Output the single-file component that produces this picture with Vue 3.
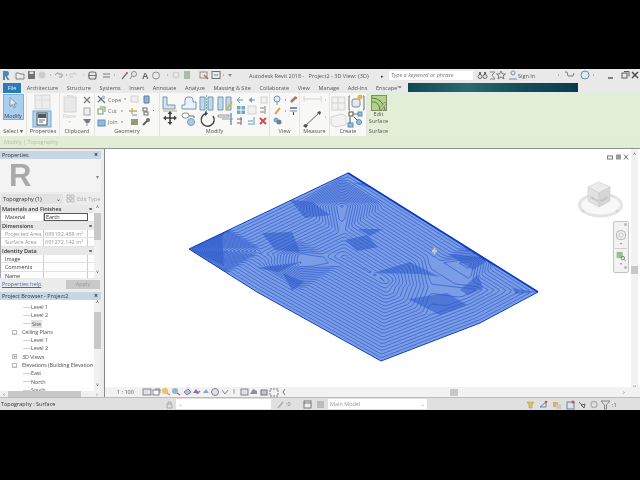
<script setup>
import { computed } from "vue"

const tabs = ["Architecture", "Structure", "Systems", "Insert", "Annotate", "Analyze", "Massing & Site", "Collaborate", "View", "Manage", "Add-Ins", "Enscape™"]

const propRows = [
  { head: "Materials and Finishes" },
  { label: "Material", value: "Earth", active: true },
  { head: "Dimensions" },
  { label: "Projected Area", value: "689192.488 m²", dim: true },
  { label: "Surface Area", value: "691272.142 m²", dim: true },
  { head: "Identity Data" },
  { label: "Image", value: "" },
  { label: "Comments", value: "" },
  { label: "Name", value: "" },
]

const tree = [
  { text: "Level 1", depth: 2 },
  { text: "Level 2", depth: 2 },
  { text: "Site", depth: 2, selected: true },
  { text: "Ceiling Plans", depth: 1, box: "-" },
  { text: "Level 1", depth: 2 },
  { text: "Level 2", depth: 2 },
  { text: "3D Views", depth: 1, box: "+" },
  { text: "Elevations (Building Elevation", depth: 1, box: "-" },
  { text: "East", depth: 2 },
  { text: "North", depth: 2 },
  { text: "South", depth: 2 },
]

// site outline, clockwise on screen
const outline = [[189, 249], [348, 173], [538, 292], [480, 323], [381, 361], [257, 292]]
const outlinePoints = outline.map(p => p.join(",")).join(" ")

// steep faces where the contours bunch together
const steep = [
  [[189, 249], [222, 233], [224, 266]],
  [[257, 268], [300, 262], [278, 272]],
  [[283, 273], [304, 282], [292, 291]],
  [[262, 233], [292, 232], [300, 252], [275, 250]],
  [[345, 240], [367, 235], [378, 247], [357, 251]],
  [[358, 229], [383, 229], [370, 236]],
  [[353, 183], [370, 182], [378, 190]],
  [[408, 299], [447, 293], [467, 305], [440, 315]],
  [[448, 254], [492, 258], [473, 270]],
  [[460, 290], [478, 275], [483, 288], [468, 295]],
  [[512, 288], [537, 292], [516, 294]],
  [[373, 273], [410, 262], [440, 277], [420, 274]],
  [[290, 200], [312, 202], [330, 215], [305, 218]],
]

const bumps = [
  [225, 250, 38, 1.2], [340, 205, 45, 0.7], [300, 265, 40, 0.6],
  [430, 285, 50, -0.4], [470, 262, 32, 0.7],
]

function edgeDistance(x, y) {
  let d = Infinity
  for (let i = 0; i < outline.length; i++) {
    const [ax, ay] = outline[i]
    const [bx, by] = outline[(i + 1) % outline.length]
    const len = Math.hypot(bx - ax, by - ay)
    d = Math.min(d, ((bx - ax) * (y - ay) - (by - ay) * (x - ax)) / len)
  }
  return d
}

function height(x, y) {
  let h = edgeDistance(x, y)
  if (h < 0) return h
  for (const [cx, cy, r, k] of bumps) {
    const reach = Math.abs(x - cx) + 1.6 * Math.abs(y - cy)
    if (reach < r) h += k * (r - reach)
  }
  return h
}

// marching squares over the height field
const contours = computed(() => {
  const step = 3
  const gap = 3.1
  const parts = []
  const cross = (x1, y1, v1, x2, y2, v2, l) => {
    const t = (l - v1) / (v2 - v1)
    return [(x1 + (x2 - x1) * t).toFixed(1), (y1 + (y2 - y1) * t).toFixed(1)]
  }
  for (let x = 186; x < 540; x += step) {
    for (let y = 170; y < 364; y += step) {
      const a = height(x, y), b = height(x + step, y)
      const c = height(x + step, y + step), d = height(x, y + step)
      const lo = Math.min(a, b, c, d), hi = Math.max(a, b, c, d)
      if (hi < 0) continue
      for (let n = Math.ceil(Math.max(lo, 0.5) / gap); n * gap < hi; n++) {
        const l = n * gap + 0.01
        const hits = []
        if ((a < l) !== (b < l)) hits.push(cross(x, y, a, x + step, y, b, l))
        if ((b < l) !== (c < l)) hits.push(cross(x + step, y, b, x + step, y + step, c, l))
        if ((d < l) !== (c < l)) hits.push(cross(x, y + step, d, x + step, y + step, c, l))
        if ((a < l) !== (d < l)) hits.push(cross(x, y, a, x, y + step, d, l))
        if (hits.length >= 2) parts.push(`M${hits[0][0]} ${hits[0][1]}L${hits[1][0]} ${hits[1][1]}`)
        if (hits.length === 4) parts.push(`M${hits[2][0]} ${hits[2][1]}L${hits[3][0]} ${hits[3][1]}`)
      }
    }
  }
  return parts.join("")
})
</script>

<template>
  <div class="screen">
    <div class="letterbox"></div>
    <div class="revit">
      <header class="titlebar">
        <svg class="qat" viewBox="0 69 240 13" width="240" height="13">
          <path d="M3 80V71h4q2 0 2 2.500t-2 2.500l2.500 4H7.500L5.500 76.500H5V80z" fill="#2b6ca8"/>
          <path d="M16 73h3l1 1h4v5h-8z" fill="none" stroke="#6d6d6d"/>
          <rect x="28" y="71" width="7" height="8" fill="#555"/><rect x="29.500" y="71.500" width="4" height="2.500" fill="#ddd"/>
          <circle cx="42" cy="75" r="3.500" fill="#c4c8cb"/><path d="M50 75h1" stroke="#777"/>
          <path d="M55 75l3-2.500v1.500h4v3h-3" fill="none" stroke="#888"/><path d="M66 75h1" stroke="#777"/>
          <path d="M77 75l-3-2.500v1.500h-4v3h3" fill="none" stroke="#c2c2c2"/><path d="M83 75h1" stroke="#aaa"/>
          <rect x="89" y="72" width="7" height="7" rx="2" fill="none" stroke="#555" stroke-width="1.200"/><path d="M88 75.500h9" stroke="#555"/>
          <path d="M103 74h7M103 77h7" stroke="#8a8f94" stroke-width="1.300"/><path d="M114 75h1" stroke="#777"/>
          <path d="M122 79l5-6" stroke="#555" stroke-width="1.300"/><circle cx="127" cy="73" r="1" fill="#b34"/>
          <circle cx="134" cy="74" r="2.500" fill="none" stroke="#777"/><path d="M132 76l-2 3" stroke="#777"/>
          <text x="142" y="79" class="qat-a">A</text>
          <path d="M156 72a3.500 3.500 0 1 1 0 7a3.500 3.500 0 1 1 0-7z" fill="none" stroke="#777"/><path d="M167 75h1" stroke="#777"/>
          <circle cx="176" cy="75" r="3" fill="none" stroke="#bbb"/>
          <path d="M184 72h6M184 74h6M184 76h6M184 78h6" stroke="#4b7c4b"/>
          <rect x="200" y="72" width="7" height="6" fill="none" stroke="#777"/><path d="M204 75l4 4" stroke="#c33" stroke-width="1.500"/>
          <rect x="212" y="71.500" width="8" height="7" fill="none" stroke="#555"/><path d="M214 75h4" stroke="#38a"/><path d="M223 75h1" stroke="#777"/>
          <path d="M228 74h4l-2 3z" fill="#777"/>
        </svg>
        <span class="doc-title">Autodesk Revit 2018 -&nbsp;&nbsp; Project2 - 3D View: {3D}</span>
        <span class="search-arrow">▸</span>
        <span class="search">Type a keyword or phrase</span>
        <svg class="comm" viewBox="475 69 165 13" width="165" height="13">
          <circle cx="480" cy="76.500" r="2" fill="none" stroke="#555"/><circle cx="485" cy="76.500" r="2" fill="none" stroke="#555"/><path d="M479 72h2v3h-2zM484 72h2v3h-2z" fill="#555"/>
          <path d="M490 72h5l-3 3 3 4h-5" fill="none" stroke="#777"/>
          <path d="M501 71l1.500 3h3l-2.500 2 1 3-3-2-3 2 1-3-2.500-2h3z" fill="none" stroke="#666"/>
          <circle cx="513" cy="73" r="2" fill="none" stroke="#5d7fa3"/><path d="M509 79h8" stroke="#5d7fa3"/>
          <path d="M558 75h1" stroke="#777"/><path d="M565 72h2l1 4h5l1-3" fill="none" stroke="#666"/>
          <circle cx="585" cy="75" r="4" fill="none" stroke="#4c7fb0"/><path d="M593 75h1" stroke="#777"/>
          <path d="M608 78h5" stroke="#333" stroke-width="1.300"/>
          <rect x="622" y="73" width="5" height="5" fill="none" stroke="#444"/><path d="M624 71.500h5v5" fill="none" stroke="#444"/>
          <path d="M634 72l6 6m0-6l-6 6" transform="translate(-2 0)" stroke="#333" stroke-width="1.500"/>
        </svg>
        <span class="signin">Sign In</span>
      </header>

      <nav class="tabbar">
        <span class="file-tab">File</span>
        <span v-for="tab in tabs" :key="tab" class="tab">{{ tab }}</span>
        <div class="banner"></div>
      </nav>

      <section class="ribbon">
        <div class="panel p-select">
          <button class="modify-btn">
            <svg viewBox="0 0 20 14" width="20" height="14"><path d="M7 1.500v9l2.300-2 1.700 3.500 1.400-.7-1.700-3.300 3-.2z" fill="#e8f2fb" stroke="#667" stroke-width=".7"/></svg>
            <span>Modify</span>
          </button>
          <span class="panel-label">Select ▾</span>
        </div>
        <div class="panel p-props">
          <svg viewBox="27 93 33 35" width="33" height="35">
            <rect x="35" y="95" width="15" height="14" fill="#ececec" stroke="#cfcfcf"/><path d="M35 100h15M42 95v14" stroke="#d5d5d5"/>
            <rect x="33" y="111" width="18" height="16" fill="#a9cfee" stroke="#5f97c5"/>
            <rect x="37" y="113" width="10" height="12" fill="#fff" stroke="#333"/><rect x="38" y="114" width="8" height="4" fill="#2d3c56"/><path d="M39 120h6M39 122h4" stroke="#556"/>
          </svg>
          <span class="panel-label">Properties</span>
        </div>
        <div class="panel p-clip">
          <svg viewBox="60 93 35 35" width="35" height="35">
            <rect x="64" y="97" width="12" height="15" fill="#e6e6e6" stroke="#cdcdcd"/><rect x="67" y="95" width="6" height="3" fill="#ddd"/>
            <text x="63" y="118" class="ghost-text">Paste</text><path d="M68 121h3l-1.500 2z" fill="#ccc"/>
            <path d="M84 97l6 6m0-6l-6 6" stroke="#666" stroke-width="1.300"/>
            <rect x="84" y="108" width="6" height="7" fill="#eee" stroke="#999"/>
            <path d="M83 119h8l-2 4h-3z" fill="#667"/><path d="M87 123v3" stroke="#886"/>
          </svg>
          <span class="panel-label">Clipboard</span>
        </div>
        <div class="panel p-geom">
          <svg viewBox="95 93 65 35" width="65" height="35">
            <path d="M98 96l7 7M104 96l-6 6" stroke="#556" stroke-width="1.200"/><rect x="102" y="96" width="3" height="3" fill="#9bc"/>
            <text x="108" y="102" class="rib-text">Cope</text><path d="M124 98.500h2l-1 1.500z" fill="#555"/>
            <rect x="98" y="109" width="5" height="5" fill="#fff" stroke="#5b8a5b"/><path d="M100 107h5v5" fill="none" stroke="#5b8a5b"/>
            <text x="108" y="113" class="rib-text">Cut</text><path d="M121 110.500h2l-1 1.500z" fill="#555"/>
            <rect x="98" y="120" width="7" height="6" fill="#7fb0dd" stroke="#4a7fb3"/>
            <text x="108" y="124" class="rib-text">Join</text><path d="M121 121.500h2l-1 1.500z" fill="#555"/>
            <rect x="131" y="96" width="7" height="6" fill="#efefef" stroke="#ccc"/>
            <path d="M144 96h5v7h-5z" fill="#7ea6cf" stroke="#47698c"/>
            <path d="M132 108v6M129 111h8" stroke="#c99a45" stroke-width="1.300"/><path d="M132 115h5" stroke="#5987b0"/>
            <rect x="143" y="108" width="4" height="3" fill="#fff" stroke="#555"/><rect x="144" y="112" width="4" height="3" fill="#fff" stroke="#555"/><path d="M153 110.500h1" stroke="#555"/>
            <rect x="131" y="119" width="7" height="6" fill="#6d9a62"/><path d="M131 125l7-6" stroke="#d55" stroke-width="1"/>
            <path d="M143 125l4-4" stroke="#444" stroke-width="2"/><circle cx="148" cy="120" r="2" fill="#555"/>
          </svg>
          <span class="panel-label">Geometry</span>
        </div>
        <div class="panel p-modify">
          <svg viewBox="160 93 110 35" width="110" height="35">
            <path d="M163 97h4v8h8v4h-12z" fill="#cfe0f0" stroke="#5a87ad"/><path d="M163 111h14" stroke="#c99a45"/>
            <path d="M182 109v-4h3v-5q0-3 3-3h2q3 0 3 3v2h3v7z" fill="#eaf1f8" stroke="#5a87ad"/>
            <path d="M200 97h5v13h-5zM208 97h5v13h-5z" fill="#b9d3e8" stroke="#5a87ad"/><path d="M206.500 95v17" stroke="#6a9" stroke-dasharray="2 1"/>
            <path d="M218 97h5v13h-5zM226 97h5v13h-5z" fill="#b9d3e8" stroke="#5a87ad"/><path d="M226 110l6-8" stroke="#d8a22c" stroke-width="1.800"/>
            <path d="M237 100h6M240 97l-3 3 3 3M249 100h6" stroke="#4d89bb" fill="none"/><path d="M249 100l3-3v6z" fill="#4d89bb"/>
            <rect x="261" y="97" width="6" height="6" fill="#f3f3f3" stroke="#ccc"/>
            <path d="M170 112v12M164 118h12" stroke="#222" stroke-width="1.600"/><path d="M170 111l-2.500 3h5zM170 125l-2.500-3h5zM163 118l3-2.500v5zM177 118l-3-2.500v5z" fill="#222"/>
            <rect x="182" y="113" width="7" height="5" rx="2.500" fill="#fff" stroke="#777"/><circle cx="191" cy="122" r="3.500" fill="#9fc3e0" stroke="#5a87ad"/><path d="M189 116h5v2" fill="none" stroke="#555"/>
            <path d="M213 116a6.500 6.500 0 1 1-7-2.500" fill="none" stroke="#222" stroke-width="1.400"/><path d="M205 111l3 2.500-3 2.500z" fill="#222"/>
            <path d="M218 115h11v2h-11zM222 119h11" stroke="#888" fill="none"/><path d="M231 113v12" stroke="#5a87ad" stroke-width="1.500"/>
            <rect x="237" y="106" width="3.500" height="3.500" fill="#5a96c8"/><rect x="241.500" y="106" width="3.500" height="3.500" fill="#5a96c8"/><rect x="237" y="110.500" width="3.500" height="3.500" fill="#5a96c8"/><rect x="241.500" y="110.500" width="3.500" height="3.500" fill="#5a96c8"/>
            <rect x="248" y="106" width="8" height="8" fill="#efefef" stroke="#ccc"/>
            <path d="M260 108h4M260 112h4M265 106v8" stroke="#667"/>
            <path d="M237 119h5M241 117v8M237 123h4" stroke="#456" fill="none"/>
            <path d="M248 121h5M248 124h5M254 117v8" stroke="#4d89bb" fill="none"/>
            <path d="M260 118l6 6m0-6l-6 6" stroke="#c9302c" stroke-width="2"/>
          </svg>
          <span class="panel-label">Modify</span>
        </div>
        <div class="panel p-view">
          <svg viewBox="270 93 30 35" width="30" height="35">
            <circle cx="277" cy="99" r="3" fill="#dcecf8" stroke="#5a87ad"/><path d="M277 102v3" stroke="#5a87ad"/><path d="M285 100h1" stroke="#555"/>
            <path d="M291 102l5-5" stroke="#8a6a52" stroke-width="2.500"/><circle cx="296" cy="98" r="1.200" fill="#c0533a"/>
            <path d="M275 114l5-6" stroke="#c99a45" stroke-width="2"/><path d="M285 111h1" stroke="#555"/>
            <path d="M290 108h7" stroke="#222" stroke-width="1.200"/><path d="M290 111h7" stroke="#5a96c8" stroke-width="1.200"/><path d="M293.500 112v3" stroke="#222"/>
            <circle cx="276" cy="120" r="2.500" fill="#6a9bc8"/><circle cx="279" cy="122" r="2.500" fill="#4d6e8e"/>
          </svg>
          <span class="panel-label">View</span>
        </div>
        <div class="panel p-measure">
          <svg viewBox="300 93 30 35" width="30" height="35">
            <path d="M304 99h17M304 96v6M321 96v6" stroke="#cfcfcf"/><path d="M325 100h1M325 117h1" stroke="#999"/>
            <path d="M305 126l13-12" stroke="#444"/><path d="M303 126l3 2 2-3-3-1zM317 113l3 2 1-3-2-1z" fill="#333"/>
          </svg>
          <span class="panel-label">Measure</span>
        </div>
        <div class="panel p-create">
          <svg viewBox="330 93 37 35" width="37" height="35">
            <rect x="332" y="97" width="13" height="13" fill="#f0f0f0" stroke="#ccc"/><path d="M338 97v13M332 103h13" stroke="#ccc"/>
            <path d="M350 96h-1v14h1M363 96h1v14h-1" stroke="#555" fill="none"/><rect x="352" y="99" width="8" height="8" rx="2" fill="#dde9f3" stroke="#777"/><circle cx="360" cy="97" r="2.500" fill="#e2a53a"/>
            <path d="M331 117l11-3 4 2v9l-11 2-4-3z" fill="#f2f2f2" stroke="#ccc"/>
            <rect x="349" y="112" width="4" height="4" fill="#fff" stroke="#333"/><rect x="358" y="112" width="4" height="4" fill="#7fb6dd" stroke="#3f7cab"/><path d="M353 114h5" stroke="#555"/>
            <rect x="348" y="123" width="5" height="4" fill="#7fb6dd" stroke="#3f7cab"/><circle cx="359" cy="122" r="2.500" fill="#7fb6dd" stroke="#3f7cab"/><path d="M350 117v6M354 117l3 3" stroke="#333"/>
          </svg>
          <span class="panel-label">Create</span>
        </div>
        <div class="panel p-surface">
          <div class="surface-tool">
            <svg viewBox="0 0 16 16" width="16" height="16">
              <rect x="0.500" y="0.500" width="15" height="15" fill="#a8cf7c" stroke="#6c7f5c"/>
              <path d="M1 7q7-1 8 8M1 3q10 0 13 12" fill="none" stroke="#41683a"/><path d="M9 13l5-6 1.500 1.500-5 6-2 .5z" fill="#d8c46a" stroke="#555" stroke-width=".5"/>
            </svg>
            <span>Edit</span>
            <span>Surface</span>
          </div>
          <span class="panel-label">Surface</span>
        </div>
      </section>

      <div class="context-bar">Modify | Topography</div>

      <main class="workspace">
        <aside class="side">
          <section class="props">
            <div class="dock-head"><span>Properties</span><b>×</b></div>
            <div class="preview">
              <span class="r-logo">R</span>
              <span class="preview-arrow">▾</span>
            </div>
            <div class="type-row">
              <span class="type-select">Topography (1)<i>⌄</i></span>
              <svg class="edit-icon" viewBox="0 0 9 9" width="9" height="9"><path d="M1 1h3v3H1zM5 1h3v3H5zM1 5h3v3H1zM5 5h3v3H5z" fill="none" stroke="#bbb"/></svg>
              <span class="edit-type">Edit Type</span>
            </div>
            <div class="prop-body">
              <div class="prop-table">
                <template v-for="row in propRows" :key="row.head || row.label">
                  <div v-if="row.head" class="prop-head"><span>{{ row.head }}</span><b>≈</b></div>
                  <div v-else class="prop-row" :class="{ dim: row.dim }">
                    <span class="prop-label">{{ row.label }}</span>
                    <span class="prop-value" :class="{ active: row.active }">{{ row.value }}</span>
                  </div>
                </template>
              </div>
              <div class="vscroll prop-scroll"><i>˄</i><em></em><i class="down">˅</i></div>
            </div>
            <div class="prop-foot">
              <a class="help">Properties help</a>
              <span class="apply">Apply</span>
            </div>
          </section>

          <section class="browser">
            <div class="dock-head"><span>Project Browser - Project2</span><b>×</b></div>
            <div class="tree-wrap">
              <ul class="tree">
                <li v-for="(item, i) in tree" :key="i" :class="'depth-' + item.depth">
                  <span v-if="item.box" class="box">{{ item.box }}</span>
                  <span v-else class="tick"></span>
                  <span class="node" :class="{ selected: item.selected }">{{ item.text }}</span>
                </li>
              </ul>
              <div class="vscroll tree-scroll"><i>˄</i><em></em><i class="down">˅</i></div>
            </div>
            <div class="hscroll"><i>‹</i><em></em><i>›</i></div>
          </section>
        </aside>

        <div class="view">
          <svg class="model" viewBox="105 149 535 249" width="535" height="249">
            <defs>
              <clipPath id="site"><polygon :points="outlinePoints"/></clipPath>
            </defs>
            <polygon :points="outlinePoints" fill="#7a9de6"/>
            <g clip-path="url(#site)">
              <path :d="contours" fill="none" stroke="#2a56c9" stroke-width="0.650"/>
              <polygon v-for="(face, i) in steep" :key="i" :points="face.map(p => p.join(',')).join(' ')" fill="#2d59cc" opacity="0.55"/>
            </g>
            <polygon :points="outlinePoints" fill="none" stroke="#0f3fc0" stroke-width="1"/>
            <path d="M348 173L538 292" stroke="#0d3cbc" stroke-width="1.800"/>
            <path d="M432 251h5M434.500 248v6" stroke="#c9c9c0" stroke-width="2"/>
          </svg>

          <svg class="viewcube" viewBox="0 0 50 44" width="50" height="44">
            <ellipse cx="25.500" cy="30" rx="21" ry="11" fill="#f8f8f8" stroke="#e4e4e4" stroke-width="3"/>
            <path d="M24 7l11 5-11 6-11-6z" fill="#ececec" stroke="#c4c4c4" stroke-width=".5"/>
            <path d="M13 12l11 6v14l-11-6z" fill="#e2e2e2" stroke="#c4c4c4" stroke-width=".5"/>
            <path d="M35 12l-11 6v14l11-6z" fill="#d6d6d6" stroke="#c4c4c4" stroke-width=".5"/>
            <text x="15" y="23" class="cube-text" transform="rotate(28 15 23)">FRONT</text>
            <text x="26" y="27" class="cube-text" transform="rotate(-28 26 27)">RIGHT</text>
            <circle cx="8" cy="36" r="1.500" fill="#d4d4d4"/><circle cx="42" cy="36" r="1.500" fill="#d4d4d4"/>
          </svg>

          <div class="nav-bar">
            <span class="nav-dot"></span>
            <svg viewBox="0 0 14 14" width="14" height="14"><rect x="2" y="2" width="10" height="10" rx="3.500" fill="none" stroke="#aaa"/><circle cx="7" cy="7" r="2.500" fill="none" stroke="#bbb"/></svg>
            <i>▾</i>
            <hr>
            <svg viewBox="0 0 14 12" width="14" height="12"><rect x="2" y="1" width="7" height="7" fill="#9dc08f"/><circle cx="9" cy="8" r="2" fill="none" stroke="#777"/><path d="M10.500 9.500l2 2" stroke="#777"/></svg>
            <i>▾</i>
            <span class="nav-dot end"></span>
          </div>

          <div class="win-icons">
            <svg viewBox="0 0 22 6" width="22" height="6"><rect x="0.500" y="2" width="5" height="3" fill="none" stroke="#777"/><rect x="9" y="0.500" width="5" height="5" fill="#999"/><path d="M17 .5l4 5m0-5l-4 5" stroke="#777"/></svg>
          </div>

          <div class="right-scroll"><i>˄</i><em></em><i class="down">˅</i></div>
          <div class="bottom-bar">
            <div class="scale">1 : 100</div>
            <svg class="bar-icons" viewBox="142 387 148 10" width="148" height="10">
              <rect x="143" y="389" width="8" height="6" fill="#ddd" stroke="#667"/>
              <rect x="153" y="390" width="6" height="5" fill="#fff" stroke="#667"/><path d="M155 389h5v4" fill="none" stroke="#667"/>
              <circle cx="165" cy="391" r="3" fill="#e8b93e"/><path d="M167 393l3 2" stroke="#c33"/>
              <circle cx="175" cy="391" r="3" fill="#7fa7cc"/><path d="M177 393l3 2" stroke="#c33" stroke-width="1.200"/>
              <path d="M184 392l4-3 3 3-4 3z" fill="#9cc0dd" stroke="#668"/>
              <path d="M193 393l3-4 3 4z" fill="#55a"/><path d="M197 394l3-3" stroke="#c33" stroke-width="1.300"/>
              <path d="M203 393l3-4 3 4z" fill="#6a9ccc"/>
              <circle cx="215" cy="392" r="3.500" fill="#ddd" stroke="#667"/>
              <path d="M222 390l3 4 3-4" fill="none" stroke="#667"/>
              <path d="M234 389v5" stroke="#888"/>
              <rect x="241" y="389" width="7" height="6" fill="#ddd" stroke="#667"/>
              <path d="M250 394l3-5 4 2v3z" fill="#778"/>
              <rect x="261" y="390" width="6" height="5" fill="#bbb" stroke="#556"/>
              <rect x="270" y="389" width="8" height="7" fill="none" stroke="#556" stroke-dasharray="2 1"/>
              <path d="M285 389l-2 3 2 3" fill="none" stroke="#555"/>
            </svg>
            <div class="bar-track"><em></em></div>
            <i class="bar-arrow">›</i>
          </div>
        </div>
      </main>

      <footer class="statusbar">
        <span class="status-text">Topography : Surface</span>
        <svg class="st-lock" viewBox="0 0 10 9" width="10" height="9"><path d="M2 4h5v4H2zM3 4V2h3v2" fill="none" stroke="#aaa"/></svg>
        <span class="st-input wide"><i>⌄</i></span>
        <svg class="st-zero" viewBox="0 0 10 9" width="10" height="9"><path d="M2 8l5-6" stroke="#aaa" stroke-width="1.300"/></svg>
        <span class="st-num">:0</span>
        <svg class="st-grid" viewBox="0 0 22 9" width="22" height="9"><rect x="1" y="1" width="7" height="7" fill="#eee" stroke="#777"/><path d="M1 3h7" stroke="#777"/><rect x="14" y="1" width="7" height="7" fill="#bbb"/></svg>
        <span class="st-input model-input">Main Model<i>⌄</i></span>
        <svg class="st-right" viewBox="525 398 90 12" width="90" height="12">
          <path d="M527 402h7l-2 3v3h-3v-3z" fill="#d8bd48" stroke="#998a38" stroke-width=".5"/>
          <path d="M540 407l6-5v5z" fill="none" stroke="#4a7fa8"/><circle cx="546" cy="402" r="1.300" fill="#c33"/>
          <rect x="553" y="402" width="5" height="5" fill="#d9a94a"/><rect x="556" y="404" width="5" height="5" fill="#c7c7c7"/>
          <rect x="567" y="402" width="7" height="7" fill="none" stroke="#4a7fa8"/><circle cx="573" cy="402" r="1.500" fill="#c33"/>
          <path d="M579 402l3 3 3-1-1 4-3-3" fill="none" stroke="#444"/>
          <circle cx="594" cy="404.500" r="3" fill="none" stroke="#aaa" stroke-width="1.300"/>
          <path d="M601 401h9l-3.500 4v4h-2v-4z" fill="none" stroke="#777"/>
        </svg>
        <span class="st-count">:1</span>
      </footer>
    </div>
    <div class="letterbox"></div>
  </div>
</template>

<style>
html, body { margin: 0; background: #000; overflow: hidden; }
</style>

<style scoped>
.screen {
  width: 640px;
  height: 480px;
  background: #000;
  display: flex;
  flex-direction: column;
  font-family: "Open Sans", "Liberation Sans", sans-serif;
  font-size: 5.5px;
  color: #444;
  overflow: hidden;
  filter: blur(0.35px);
}
.letterbox { height: 69px; flex: none; background: #000; }
.letterbox:last-child { flex: 1; }
.revit { height: 341px; flex: none; display: flex; flex-direction: column; background: #e4e4e4; }

.titlebar { height: 13px; flex: none; display: flex; align-items: center; position: relative; background: #e9e9e9; }
.qat { flex: none; opacity: 0.8; }
.qat-a { font: bold 9px "Liberation Sans", sans-serif; fill: #444; }
.doc-title { margin-left: 9px; width: 127px; white-space: nowrap; color: #555; }
.search-arrow { width: 13px; font-size: 5px; text-align: center; }
.search { width: 84px; height: 9px; line-height: 9px; background: #fff; color: #777; font-style: italic; box-sizing: border-box; padding-left: 2px; }
.comm { position: absolute; left: 475px; top: 0; opacity: 0.85; }
.signin { position: absolute; left: 518px; top: 3px; color: #555; }

.tabbar { height: 11px; flex: none; display: flex; align-items: center; gap: 8.7px; background: #e9e9e9; padding-left: 3px; position: relative; }
.file-tab { width: 18px; height: 10px; line-height: 10px; text-align: center; background: #2a7cb9; color: #e8f3fb; margin-right: -3px; }
.tab { white-space: nowrap; color: #555; }
.banner {
  position: absolute; left: 408px; top: 1px; width: 170px; height: 9px;
  background: linear-gradient(90deg, #0f4a55, #2a6a70 35%, #135058 65%, #0b3a50);
}

.ribbon { height: 43px; flex: none; display: flex; background: linear-gradient(90deg, #f8f8f6 367px, #e3eed7 367px); }
.panel { display: flex; flex-direction: column; align-items: center; border-right: 1px solid #e4e4e2; box-sizing: border-box; height: 100%; }
.panel svg { flex: none; display: block; opacity: 0.85; }
.panel-label { margin-top: auto; padding-bottom: 1px; white-space: nowrap; color: #555; line-height: 7px; }
.p-select { width: 27px; }
.p-props { width: 33px; }
.p-clip { width: 35px; }
.p-geom { width: 65px; }
.p-modify { width: 110px; }
.p-view { width: 30px; }
.p-measure { width: 30px; }
.p-create { width: 37px; }
.p-surface { width: 23px; border-right: none; }
.modify-btn {
  margin: 1px 0 0; padding: 1px 0 0; width: 21px; height: 26px; font: inherit; color: #445;
  background: #a9cfee; border: 1px solid #7fb0d8; display: flex; flex-direction: column; align-items: center; gap: 2px;
}
.rib-text { font-size: 5.500px; fill: #555; }
.ghost-text { font-size: 5px; fill: #bbb; }
.surface-tool { display: flex; flex-direction: column; align-items: center; padding-top: 2px; line-height: 7px; color: #555; }

.context-bar { height: 13px; flex: none; line-height: 13px; padding-left: 4px; background: #e2edd6; color: #b5bdaa; border-bottom: 1px solid #8f938a; box-sizing: border-box; }

.workspace { flex: 1; min-height: 0; display: flex; }
.side { width: 105px; flex: none; display: flex; flex-direction: column; background: #ececec; border-right: 1px solid #888; box-sizing: border-box; padding-right: 3px; }
.dock-head { height: 8px; line-height: 8px; display: flex; justify-content: space-between; padding: 0 3px 0 2px; background: #c6d6e5; color: #333; flex: none; }
.dock-head b { font-size: 7px; }

.props { height: 143px; flex: none; padding-top: 2px; box-sizing: border-box; display: flex; flex-direction: column; }
.preview { height: 33px; flex: none; display: flex; align-items: center; background: #f3f3f3; position: relative; }
.r-logo { font: bold 31px/1 "Liberation Sans", sans-serif; color: #a9a9a9; margin-left: 9px; }
.preview-arrow { position: absolute; right: 2px; top: 14px; color: #888; }
.type-row { height: 13px; flex: none; display: flex; align-items: center; padding-left: 1px; }
.type-select { width: 62px; height: 10px; line-height: 10px; background: #e2e2e2; padding-left: 2px; box-sizing: border-box; display: flex; justify-content: space-between; color: #333; }
.type-select i { padding-right: 2px; font-style: normal; }
.edit-icon { flex: none; margin-left: 3px; }
.edit-type { color: #aaa; padding-left: 2px; white-space: nowrap; }
.prop-body { flex: 1; min-height: 0; display: flex; overflow: hidden; }
.prop-table { flex: 1; min-width: 0; background: #fff; border-left: 1px solid #aaa; }
.prop-head { height: 8px; line-height: 8px; background: #e8e8e8; display: flex; justify-content: space-between; padding: 0 2px 0 1px; color: #333; font-weight: 600; }
.prop-head b { font-size: 5px; }
.prop-row { height: 8.500px; line-height: 8.500px; display: flex; border-bottom: 1px solid #e2e2e2; box-sizing: border-box; color: #444; }
.prop-row.dim { color: #999; }
.prop-label { width: 43px; flex: none; padding-left: 4px; box-sizing: border-box; border-right: 1px solid #ccc; white-space: nowrap; overflow: hidden; letter-spacing: -0.1px; }
.prop-value { width: 44px; white-space: nowrap; overflow: hidden; padding-left: 1px; box-sizing: border-box; border-right: 1px solid #ccc; }
.prop-value.active { border: 1px solid #555; line-height: 6px; color: #333; }

.vscroll { width: 7px; flex: none; display: flex; flex-direction: column; align-items: center; background: #f0f0f0; font-size: 5px; line-height: 5px; }
.vscroll i { font-style: normal; height: 8px; }
.vscroll em { display: block; background: #c8c8c8; width: 100%; }
.vscroll .down { margin-top: auto; }
.prop-scroll em { height: 27px; }
.prop-foot { height: 14px; flex: none; display: flex; align-items: flex-start; justify-content: space-between; padding: 2px 1px 0 2px; box-sizing: border-box; }
.help { color: #3a6fb8; text-decoration: underline; }
.apply { width: 34px; height: 9px; line-height: 9px; text-align: center; background: #c8c8c8; color: #999; }

.browser { flex: 1; min-height: 0; display: flex; flex-direction: column; }
.tree-wrap { flex: 1; min-height: 0; display: flex; overflow: hidden; background: #fff; }
.tree { flex: 1; min-width: 0; margin: 0; padding: 3px 0 0; list-style: none; overflow: hidden; }
.tree li { height: 8.300px; line-height: 8.300px; display: flex; align-items: center; white-space: nowrap; color: #555; letter-spacing: -0.12px; }
.depth-1 { padding-left: 12px; }
.depth-2 { padding-left: 23px; }
.tick { width: 8px; height: 1px; background: #d0d0d0; flex: none; }
.box { width: 5px; height: 5px; line-height: 4px; border: 1px solid #bbb; box-sizing: border-box; font-size: 5px; text-align: center; margin-right: 5px; flex: none; }
.node.selected { background: #e4e4e4; padding: 0 1px; }
.tree-scroll em { height: 37px; margin-top: 4px; }
.hscroll { height: 6px; flex: none; display: flex; align-items: center; justify-content: space-between; background: #f0f0f0; font-size: 5px; }
.hscroll i { width: 8px; text-align: center; font-style: normal; }
.hscroll em { flex: 1; margin-right: 12px; height: 100%; background: #c8c8c8; }

.view { flex: 1; min-width: 0; position: relative; background: #fff; overflow: hidden; display: flex; flex-direction: column; }
.model { position: absolute; left: 0; top: 0; }
.viewcube { position: absolute; left: 470px; top: 26px; }
.cube-text { font-size: 2.800px; fill: #999; }
.nav-bar {
  position: absolute; left: 508px; top: 72px; width: 16px; height: 52px; background: #f2f2f2;
  border: 1px solid #c4c4c4; border-radius: 2px; box-sizing: border-box;
  display: flex; flex-direction: column; align-items: center; font-size: 4px; color: #888;
}
.nav-bar i { font-style: normal; height: 5px; line-height: 5px; }
.nav-bar hr { width: 12px; margin: 2px 0; border: none; border-top: 1px solid #cfcfcf; }
.nav-dot { width: 3px; height: 3px; margin: 1px 0 3px; border-radius: 50%; background: #bbb; align-self: flex-end; margin-right: 1px; }
.nav-dot.end { margin-top: auto; }
.win-icons { position: absolute; left: 502px; top: 5px; line-height: 0; }
.right-scroll { position: absolute; right: 2px; top: 0; bottom: 7px; width: 7px; background: #f2f2f2; display: flex; flex-direction: column; align-items: center; font-size: 5px; line-height: 5px; color: #555; padding-top: 3px; box-sizing: border-box; }
.right-scroll i { font-style: normal; }
.right-scroll em { display: block; width: 100%; height: 8px; background: #c8c8c8; margin-top: 109px; }
.right-scroll .down { margin-top: auto; }
.bottom-bar { margin-top: auto; height: 10px; flex: none; display: flex; align-items: center; background: #f2f2f2; position: relative; }
.scale { width: 37px; flex: none; padding-left: 12px; box-sizing: border-box; color: #555; }
.bar-icons { flex: none; opacity: 0.8; }
.bar-track { flex: 1; height: 7px; background: #f2f2f2; position: relative; }
.bar-track em { position: absolute; left: 160px; top: 0; width: 8px; height: 7px; background: #c8c8c8; }
.bar-arrow { font-style: normal; width: 17px; flex: none; font-size: 6px; color: #444; }

.statusbar { height: 13px; flex: none; display: flex; align-items: center; background: #e0e0e0; position: relative; border-top: 1px solid #bbb; box-sizing: border-box; }
.status-text { width: 165px; flex: none; padding-left: 1px; box-sizing: border-box; color: #333; }
.st-lock { flex: none; }
.st-input { height: 10px; line-height: 10px; background: #fff; display: flex; justify-content: space-between; padding: 0 2px; box-sizing: border-box; color: #999; flex: none; }
.st-input i { font-style: normal; color: #aaa; }
.st-input.wide { width: 95px; margin-left: 1px; }
.st-zero { flex: none; margin-left: 5px; }
.st-num { width: 14px; color: #777; }
.st-grid { flex: none; margin-left: 3px; }
.model-input { width: 99px; margin-left: 3px; }
.st-right { position: absolute; left: 525px; top: 0; opacity: 0.85; }
.st-count { position: absolute; left: 612px; top: 3px; color: #555; }
</style>
